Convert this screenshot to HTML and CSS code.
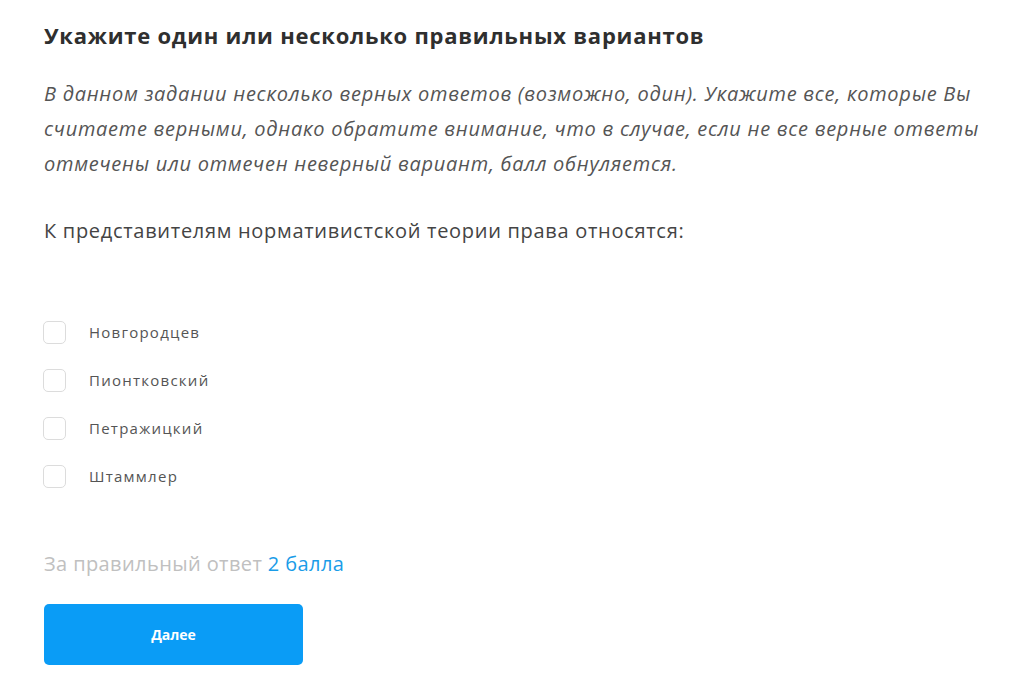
FILE: index.html
```html
<!DOCTYPE html>
<html lang="ru">
<head>
<meta charset="utf-8">
<link rel="stylesheet" href="styles.css">
</head>
<body>
<main class="task">
  <h1 class="title">Укажите один или несколько правильных вариантов</h1>
  <p class="hint">В данном задании несколько верных ответов (возможно, один). Укажите все, которые Вы считаете верными, однако обратите внимание, что в случае, если не все верные ответы отмечены или отмечен неверный вариант, балл обнуляется.</p>
  <p class="question">К представителям нормативистской теории права относятся:</p>
  <ul class="options">
    <li class="option"><span class="box"></span><span class="label">Новгородцев</span></li>
    <li class="option"><span class="box"></span><span class="label">Пионтковский</span></li>
    <li class="option"><span class="box"></span><span class="label">Петражицкий</span></li>
    <li class="option"><span class="box"></span><span class="label">Штаммлер</span></li>
  </ul>
  <p class="score">За правильный ответ <span class="points">2 балла</span></p>
  <button class="next">Далее</button>
</main>
</body>
</html>
```
FILE: styles.css
```css
* { box-sizing: border-box; }
html, body { margin: 0; padding: 0; background: #fff; }
body { font-family: "Open Sans", "Noto Sans", sans-serif; color: #444; }
.task { padding: 20px 44px 0 44px; display: flex; flex-direction: column; align-items: flex-start; }
.title { margin: 0; font-size: 22px; font-weight: 700; color: #2f2f2f; line-height: 30px; letter-spacing: 0.75px; }
.hint { margin: 26px 0 0 0; font-size: 20px; font-style: italic; color: #555; line-height: 35px; letter-spacing: 0.73px; max-width: 945px; }
.question { margin: 36px 0 0 0; font-size: 20px; color: #444; line-height: 28px; letter-spacing: 0.7px; }
.options { list-style: none; margin: 75px 0 0 0; padding: 0; display: flex; flex-direction: column; gap: 24px; }
.option { display: flex; align-items: center; gap: 23px; height: 24px; }
.box { width: 23px; height: 23px; border: 1.5px solid #dcdcdc; border-radius: 5px; margin-left: -1px; }
.label { font-size: 15px; color: #555; letter-spacing: 1.25px; }
.score { margin: 62px 0 0 0; font-size: 20px; color: #c0c0c0; line-height: 28px; letter-spacing: 0.4px; }
.points { color: #1a9ce8; }
.next { margin-top: 26px; width: 259px; height: 61px; border: none; border-radius: 5px; background: #0a9cf6; color: #fff; font-family: "Open Sans", sans-serif; font-weight: 700; font-size: 14px; }
```
